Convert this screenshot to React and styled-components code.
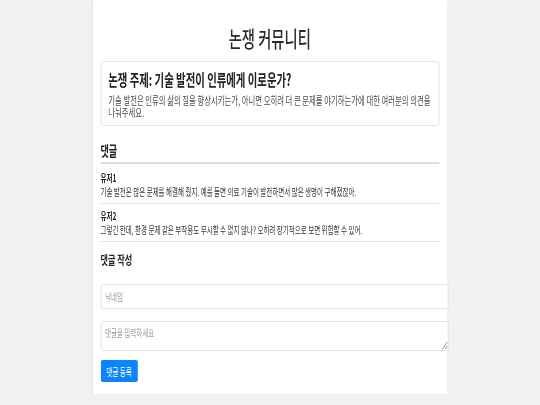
import styled, { createGlobalStyle } from 'styled-components'

const GlobalStyle = createGlobalStyle`
  html, body {
    margin: 0;
    padding: 0;
    background: #f2f2f2;
    overflow: hidden;
  }
  body {
    font-family: "Noto Sans CJK KR", "Noto Sans", sans-serif;
    color: #333;
  }
`

// the reference is horizontally squeezed, so the page is laid out wide and scaled on x
const Page = styled.div`
  width: 830px;
  transform: scaleX(0.65);
  transform-origin: left top;
`

const Container = styled.div`
  width: 545px;
  margin: 0 auto;
  box-sizing: border-box;
  padding: 24px 12px 12px;
  background: #fff;
  box-shadow: 0 0 5px rgba(0, 0, 0, 0.1);
`

const Title = styled.h1`
  margin: 0 0 11px;
  font-size: 22px;
  line-height: 26px;
  font-weight: 500;
  text-align: center;
  color: #2b2b2b;
`

const Topic = styled.div`
  border: 1px solid #ddd;
  border-radius: 4px;
  padding: 7px 11px;
`

const TopicTitle = styled.h2`
  margin: 0;
  font-size: 16px;
  line-height: 20px;
  font-weight: 700;
  color: #222;
`

const TopicText = styled.p`
  margin: 5px 0 0;
  font-size: 11.3px;
  line-height: 12px;
  color: #4a4a4a;
`

const SectionTitle = styled.h2`
  margin: 16px 0 0;
  padding-bottom: 3px;
  border-bottom: 2px solid #ddd;
  font-size: 14px;
  line-height: 17px;
  font-weight: 700;
  color: #222;
`

const CommentList = styled.div`
  margin-top: 2px;
`

const Comment = styled.div`
  padding: 5px 0;
  border-bottom: 1px solid #e2e2e2;
`

const Author = styled.div`
  font-size: 10px;
  line-height: 14px;
  font-weight: 700;
  color: #222;
`

const CommentText = styled.div`
  font-size: 10px;
  line-height: 13px;
  color: #333;
`

const FormTitle = styled.h3`
  margin: 10px 0 16px;
  font-size: 12.5px;
  line-height: 16px;
  font-weight: 700;
  color: #222;
`

const Form = styled.form`
  display: flex;
  flex-direction: column;
  align-items: flex-start;
`

const Field = styled.input`
  width: 100%;
  height: 23px;
  padding: 0 6px;
  border: 1px solid #ddd;
  border-radius: 3px;
  font-family: inherit;
  font-size: 10px;
  color: #333;
  outline: none;

  &::placeholder {
    color: #999;
  }
`

const TextArea = styled.textarea`
  box-sizing: border-box;
  width: calc(100% + 14px);
  height: 30px;
  margin-top: 12px;
  padding: 5px 6px;
  border: 1px solid #ddd;
  border-radius: 3px;
  font-family: inherit;
  font-size: 10px;
  line-height: 12px;
  color: #333;
  outline: none;

  &::placeholder {
    color: #999;
  }
`

const Button = styled.button`
  margin-top: 9px;
  height: 22px;
  padding: 0 9px;
  border: none;
  border-radius: 3px;
  background: #0a84ff;
  color: #fff;
  font-family: inherit;
  font-size: 10px;
  cursor: pointer;
`

const comments = [
  {
    id: 1,
    author: '유저1',
    text: '기술 발전은 많은 문제를 해결해 줬지. 예를 들면 의료 기술이 발전하면서 많은 생명이 구해졌잖아.',
  },
  {
    id: 2,
    author: '유저2',
    text: '그렇긴 한데, 환경 문제 같은 부작용도 무시할 수 없지 않나? 오히려 장기적으로 보면 위험할 수 있어.',
  },
]

const App = () => {
  return (
    <>
      <GlobalStyle />
      <Page>
        <Container>
          <Title>논쟁 커뮤니티</Title>
          <Topic>
            <TopicTitle>논쟁 주제: 기술 발전이 인류에게 이로운가?</TopicTitle>
            <TopicText>
              기술 발전은 인류의 삶의 질을 향상시키는가, 아니면 오히려 더 큰 문제를 야기하는가에 대한 여러분의 의견을 나눠주세요.
            </TopicText>
          </Topic>

          <SectionTitle>댓글</SectionTitle>
          <CommentList>
            {comments.map((c) => (
              <Comment key={c.id}>
                <Author>{c.author}</Author>
                <CommentText>{c.text}</CommentText>
              </Comment>
            ))}
          </CommentList>

          <FormTitle>댓글 작성</FormTitle>
          <Form onSubmit={(e) => e.preventDefault()}>
            <Field type="text" placeholder="닉네임" />
            <TextArea placeholder="댓글을 입력하세요" />
            <Button type="submit">댓글 등록</Button>
          </Form>
        </Container>
      </Page>
    </>
  )
}

export default App
